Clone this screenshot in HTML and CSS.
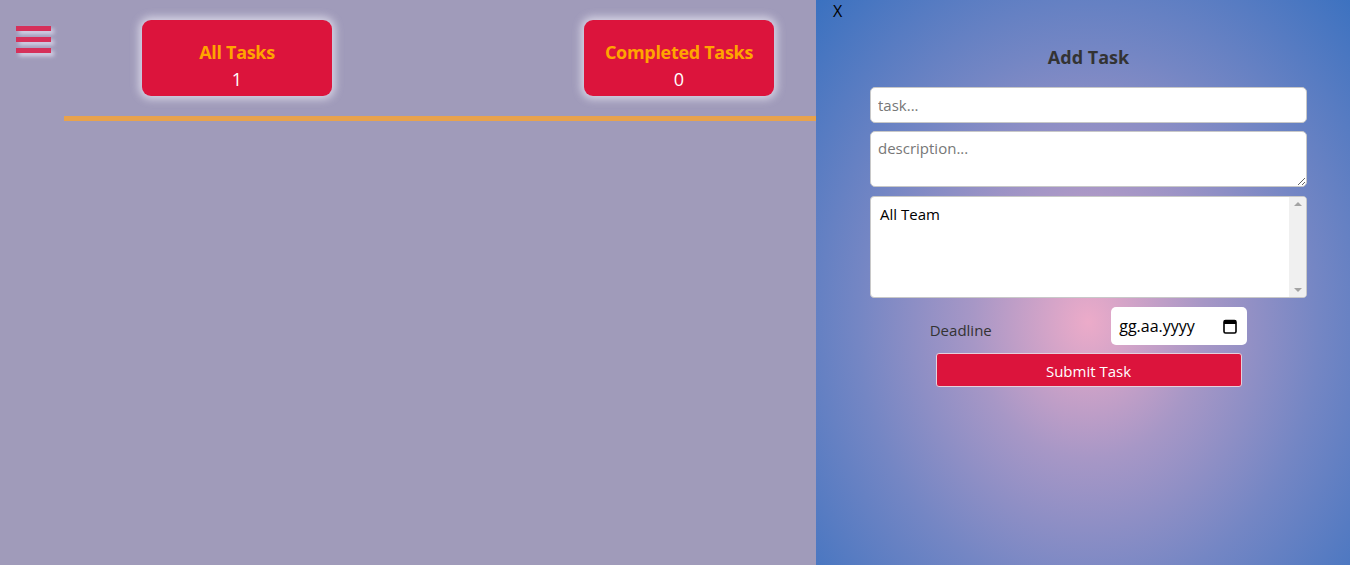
FILE: index.html
```html
<!DOCTYPE html>
<html lang="tr">
<head>
<meta charset="utf-8">
<title>Tasks</title>
<link rel="stylesheet" href="styles.css">
</head>
<body>
<div class="app">
  <main class="board">
    <header class="top">
      <button class="burger" aria-label="menu">
        <span class="bar"></span><span class="bar"></span><span class="bar"></span>
      </button>
      <div class="cards">
        <div class="card">
          <div class="card-title">All Tasks</div>
          <div class="card-count">1</div>
        </div>
        <div class="card">
          <div class="card-title">Completed Tasks</div>
          <div class="card-count">0</div>
        </div>
      </div>
    </header>
    <div class="rule"></div>
  </main>
  <aside class="panel">
    <div class="close">X</div>
    <form class="form">
      <h2 class="form-title">Add Task</h2>
      <input class="field task" type="text" placeholder="task...">
      <textarea class="field desc" placeholder="description..."></textarea>
      <div class="listbox">
        <div class="list-items"><div class="list-item">All Team</div></div>
        <div class="scroll">
          <span class="arrow up"></span>
          <span class="arrow down"></span>
        </div>
      </div>
      <div class="deadline-row">
        <label class="deadline-label">Deadline</label>
        <div class="date">
          <span class="date-text">gg.aa.yyyy</span>
          <svg class="cal" width="14" height="15" viewBox="0 0 14 15">
            <rect x="1" y="1.5" width="12" height="12.5" rx="1.5" fill="none" stroke="#000" stroke-width="1.6"/>
            <rect x="1" y="1.5" width="12" height="3.5" fill="#000"/>
          </svg>
        </div>
      </div>
      <button class="submit" type="button">Submit Task</button>
    </form>
  </aside>
</div>
</body>
</html>
```

FILE: styles.css
```css
* { box-sizing: border-box; }
html, body { margin: 0; padding: 0; }
body {
  font-family: "Open Sans", "Noto Sans", sans-serif;
  background: #a09bba;
  width: 1350px;
  height: 565px;
  overflow: hidden;
}
.app {
  display: flex;
  height: 565px;
}
.board {
  width: 816px;
  flex: none;
}
.top {
  display: flex;
  align-items: flex-start;
  height: 116px;
}
.burger {
  background: none;
  border: 0;
  padding: 0;
  margin: 26px 0 0 16px;
  display: flex;
  flex-direction: column;
  gap: 6px;
}
.bar {
  display: block;
  width: 35px;
  height: 5px;
  background: #d6305a;
  box-shadow: 3px 3px 4px rgba(225, 222, 240, 0.9);
}
.cards {
  display: flex;
  gap: 252px;
  margin: 20px 0 0 91px;
}
.card {
  width: 190px;
  height: 76px;
  background: #dc143c;
  border-radius: 9px;
  box-shadow: 0 0 8px 3px rgba(240, 238, 248, 0.7);
  text-align: center;
  padding-top: 20px;
}
.card-title {
  color: #ffa500;
  font-weight: 700;
  font-size: 18px;
  line-height: 24px;
  letter-spacing: -0.3px;
}
.card-count {
  color: #fff;
  font-size: 18px;
  line-height: 26px;
  margin-top: 2px;
}
.rule {
  height: 5px;
  background: #e8a24c;
  margin-left: 64px;
}
.panel {
  width: 534px;
  flex: none;
  height: 565px;
  background: radial-gradient(ellipse at 51% 57%, #ecabc9 0%, #a797c6 30%, #7486c4 60%, #3a71c0 100%);
}
.close {
  font-size: 16px;
  line-height: 22px;
  color: #000;
  margin-left: 17px;
  width: 12px;
}
.form {
  margin-left: 54px;
  width: 437px;
  display: flex;
  flex-direction: column;
}
.form-title {
  margin: 23px 0 18px;
  text-align: center;
  font-size: 18px;
  line-height: 24px;
  color: #333;
  font-weight: 700;
}
.field {
  font-family: inherit;
  font-size: 15px;
  border: 1px solid #c8c8c8;
  border-radius: 5px;
  background: #fff;
  padding: 6px 7px;
  color: #000;
}
.field::placeholder { color: #777; }
.task { height: 36px; }
.desc {
  height: 56px;
  margin-top: 8px;
  resize: vertical;
}
.listbox {
  margin-top: 9px;
  height: 102px;
  background: #fff;
  border: 1px solid #c8c8c8;
  border-radius: 4px;
  display: flex;
  overflow: hidden;
}
.list-items {
  flex: 1;
  padding: 7px 9px;
}
.list-item {
  font-size: 15px;
  line-height: 21px;
  color: #000;
}
.scroll {
  width: 17px;
  background: #f0f0f0;
  display: flex;
  flex-direction: column;
  justify-content: space-between;
  align-items: center;
  padding: 5px 0;
}
.arrow {
  width: 0;
  height: 0;
  border-left: 4px solid transparent;
  border-right: 4px solid transparent;
}
.arrow.up { border-bottom: 4px solid #a3a3a3; }
.arrow.down { border-top: 4px solid #a3a3a3; }
.deadline-row {
  display: flex;
  justify-content: space-around;
  align-items: center;
  margin-top: 9px;
  height: 38px;
}
.deadline-label {
  font-size: 15px;
  color: #333;
  padding-top: 8px;
}
.date {
  width: 136px;
  height: 38px;
  background: #fff;
  border-radius: 5px;
  display: flex;
  align-items: center;
  justify-content: space-between;
  padding: 0 10px 0 8px;
}
.date-text {
  font-size: 16px;
  color: #000;
}
.cal { display: block; }
.submit {
  margin: 8px auto 0;
  width: 306px;
  height: 34px;
  background: #dc143c;
  color: #fff;
  border: 1px solid #e5d0dc;
  border-radius: 3px;
  font-family: inherit;
  font-size: 15px;
  padding-top: 2px;
}
```
